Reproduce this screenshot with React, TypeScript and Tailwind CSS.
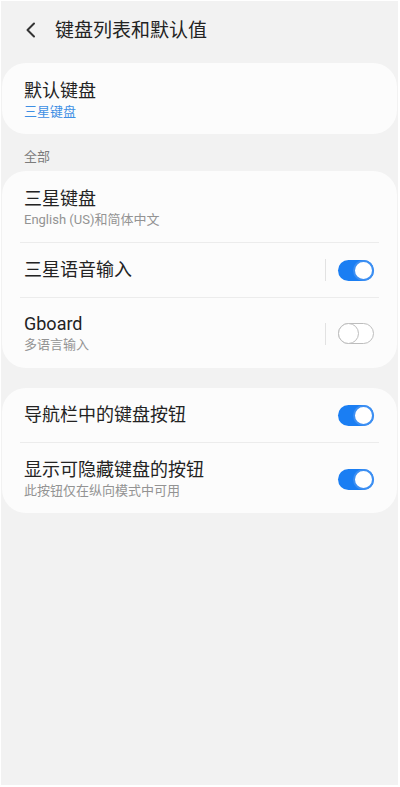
import React from "react";

const FONT = { fontFamily: "Roboto, 'Noto Sans CJK SC', sans-serif" };

function Toggle({ on }: { on: boolean }) {
  if (on) {
    return (
      <div className="relative h-[21px] w-[36px] rounded-full bg-[#1a7ef3]">
        <div className="absolute right-0 top-0 h-[21px] w-[21px] rounded-full border-2 border-[#3d8ff2] bg-white" />
      </div>
    );
  }
  return (
    <div className="relative h-[21px] w-[36px] rounded-full border-[1.5px] border-[#bdbdbd] bg-white">
      <div className="absolute left-[-1.5px] top-[-1.5px] h-[21px] w-[21px] rounded-full border-[1.5px] border-[#bdbdbd] bg-white" />
    </div>
  );
}

function Divider() {
  return <div className="mx-[18px] h-px bg-[#ececec]" />;
}

export default function App() {
  return (
    <div
      className="min-h-[787px] w-[400px] border-t border-l border-r-2 border-b-2 border-white bg-[#f2f2f2] text-[#232323]"
      style={FONT}
    >
      {/* Header */}
      <header className="flex h-[58px] items-center">
        <svg width="11" height="16" viewBox="0 0 11 16" className="ml-[24px]" fill="none">
          <polyline points="9,1.5 2.5,8 9,14.5" stroke="#333" strokeWidth="2" strokeLinecap="round" strokeLinejoin="round" />
        </svg>
        <h1 className="ml-[19px] text-[19px] leading-none">键盘列表和默认值</h1>
      </header>

      {/* Default keyboard */}
      <section className="mx-[1px] mt-[4px] rounded-[24px] bg-[#fcfcfc] pb-[13px] pl-[22px] pt-[17px]">
        <div className="text-[18px] leading-[22px]">默认键盘</div>
        <div className="mt-px text-[13px] leading-[18px] text-[#3e8fe4]">三星键盘</div>
      </section>

      <div className="pb-[4px] pl-[23px] pt-[13px] text-[13px] leading-[20px] text-[#7c7c7c]">全部</div>

      {/* All keyboards */}
      <section className="mx-[1px] rounded-[24px] bg-[#fcfcfc]">
        <div className="pb-[13px] pl-[22px] pt-[17px]">
          <div className="text-[18px] leading-[22px]">三星键盘</div>
          <div className="mt-px text-[13px] leading-[18px] text-[#939393]">English (US)和简体中文</div>
        </div>
        <Divider />
        <div className="flex h-[54px] items-center pl-[22px] pr-[23px]">
          <div className="flex-1 text-[18px] leading-[22px]">三星语音输入</div>
          <div className="mr-[12px] h-[22px] w-px bg-[#e2e2e2]" />
          <Toggle on />
        </div>
        <Divider />
        <div className="flex items-center pb-[14px] pl-[22px] pr-[23px] pt-[15px]">
          <div className="flex-1">
            <div className="text-[18px] leading-[22px]">Gboard</div>
            <div className="mt-px text-[13px] leading-[18px] text-[#939393]">多语言输入</div>
          </div>
          <div className="mr-[12px] h-[22px] w-px bg-[#e2e2e2]" />
          <Toggle on={false} />
        </div>
      </section>

      {/* Navigation bar options */}
      <section className="mx-[1px] mt-[20px] rounded-[24px] bg-[#fcfcfc]">
        <div className="flex h-[54px] items-center pl-[22px] pr-[23px]">
          <div className="flex-1 text-[18px] leading-[22px]">导航栏中的键盘按钮</div>
          <Toggle on />
        </div>
        <Divider />
        <div className="flex items-center pb-[13px] pl-[22px] pr-[23px] pt-[16px]">
          <div className="flex-1">
            <div className="text-[18px] leading-[22px]">显示可隐藏键盘的按钮</div>
            <div className="mt-px text-[13px] leading-[18px] text-[#939393]">此按钮仅在纵向模式中可用</div>
          </div>
          <Toggle on />
        </div>
      </section>
    </div>
  );
}
